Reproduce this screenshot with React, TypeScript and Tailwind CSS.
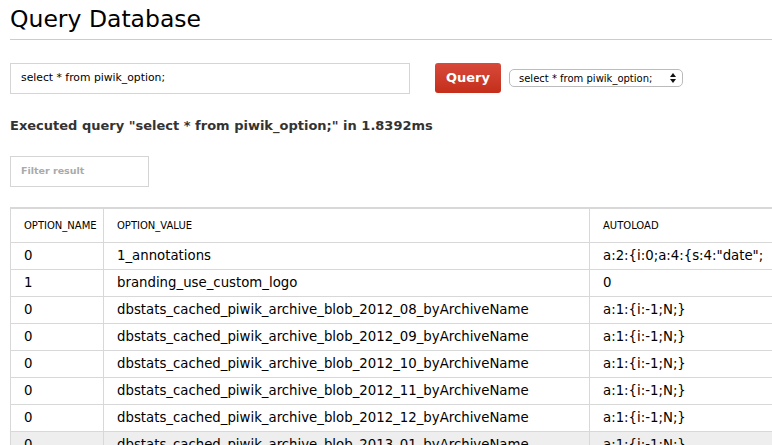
import React from "react";

const rows: [string, string, string][] = [
  ["0", "1_annotations", 'a:2:{i:0;a:4:{s:4:"date";'],
  ["1", "branding_use_custom_logo", "0"],
  ["0", "dbstats_cached_piwik_archive_blob_2012_08_byArchiveName", "a:1:{i:-1;N;}"],
  ["0", "dbstats_cached_piwik_archive_blob_2012_09_byArchiveName", "a:1:{i:-1;N;}"],
  ["0", "dbstats_cached_piwik_archive_blob_2012_10_byArchiveName", "a:1:{i:-1;N;}"],
  ["0", "dbstats_cached_piwik_archive_blob_2012_11_byArchiveName", "a:1:{i:-1;N;}"],
  ["0", "dbstats_cached_piwik_archive_blob_2012_12_byArchiveName", "a:1:{i:-1;N;}"],
  ["0", "dbstats_cached_piwik_archive_blob_2013_01_byArchiveName", "a:1:{i:-1;N;}"],
];

export default function App() {
  return (
    <div className="w-[772px] h-[445px] overflow-hidden bg-white pl-[10px] font-['DejaVu_Sans',Verdana,sans-serif] text-[#222]">
      <h1 className="text-[23.5px] leading-[38px] pt-0 text-black">Query Database</h1>
      <div className="border-b border-[#cccccc] mt-[1px]"></div>

      <div className="flex items-center mt-[22px] h-[32px]">
        <div className="w-[400px] h-[31px] border border-[#d5d5d5] flex items-center pl-[10px] text-[10.8px] text-black">
          select * from piwik_option;
        </div>
        <button className="ml-[25px] w-[66px] h-[30px] rounded-[3px] bg-gradient-to-b from-[#d8493a] to-[#c42e1a] text-white font-bold text-[13px]">
          Query
        </button>
        <div className="ml-[8px] w-[174px] h-[18px] border border-[#bbbbbb] rounded-[5px] flex items-center justify-between pl-[9px] pr-[6px] text-[10px] text-black">
          <span>select * from piwik_option;</span>
          <svg width="6" height="10" viewBox="0 0 6 10">
            <path d="M3 0 L6 4 H0 Z M0 6 H6 L3 10 Z" fill="#111" />
          </svg>
        </div>
      </div>

      <p className="mt-[22px] font-bold text-[13px] text-[#333] leading-[20px]">
        Executed query "select * from piwik_option;" in 1.8392ms
      </p>

      <div className="mt-[20px] w-[139px] h-[31px] border border-[#d5d5d5] flex items-center pl-[10px] text-[9.5px] font-bold text-[#aaaaaa]">
        Filter result
      </div>

      <table className="mt-[20px] table-fixed w-[880px] border-collapse text-[13.3px] text-black whitespace-nowrap">
        <colgroup>
          <col className="w-[93px]" />
          <col className="w-[486px]" />
          <col className="w-[301px]" />
        </colgroup>
        <thead>
          <tr className="h-[34px] border-t-2 border-[#d8d8d8]">
            <th className="border-l border-r border-[#d8d8d8] text-left font-normal text-[10px] pl-[13px]">OPTION_NAME</th>
            <th className="border-r border-[#d8d8d8] text-left font-normal text-[10px] pl-[13px]">OPTION_VALUE</th>
            <th className="text-left font-normal text-[10px] pl-[13px]">AUTOLOAD</th>
          </tr>
        </thead>
        <tbody>
          {rows.map((r, i) => (
            <tr key={i} className={"h-[27px] border-t border-[#d8d8d8] " + (i === 7 ? "bg-[#eeeeee]" : "")}>
              <td className="border-l border-r border-[#d8d8d8] pl-[13px]">{r[0]}</td>
              <td className="border-r border-[#d8d8d8] pl-[13px]">{r[1]}</td>
              <td className="pl-[13px]">{r[2]}</td>
            </tr>
          ))}
        </tbody>
      </table>
    </div>
  );
}
